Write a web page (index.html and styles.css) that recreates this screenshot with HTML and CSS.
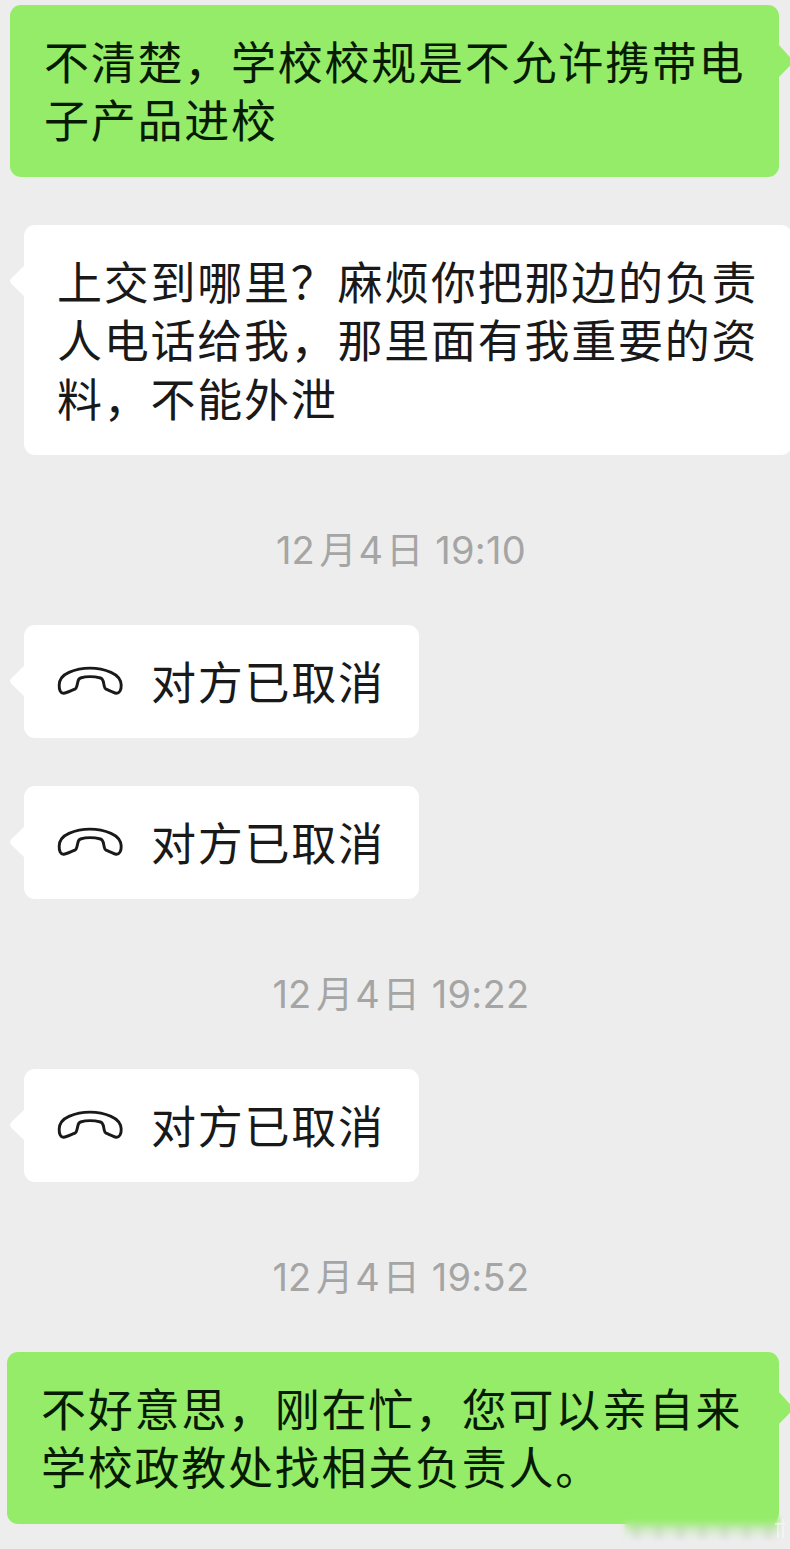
FILE: index.html
```html
<!DOCTYPE html>
<html lang="zh-CN">
<head>
<meta charset="utf-8">
<title>聊天</title>
<link rel="stylesheet" href="styles.css">
</head>
<body>
<svg class="defs" width="0" height="0" aria-hidden="true">
  <symbol id="phone" viewBox="0 0 68 34">
    <path d="M7.8 30.3C4.6 30.6 3 27 3.2 22C3.4 14.5 8 11.5 13 9.3C26 3.7 42 3.7 55 9.3C60 11.5 64.9 15.5 65.2 22C65.4 27 63.5 30.6 60 30.2C58.2 30 53 27.4 50 26.2C48.5 25.5 48.5 24 48.1 22.3C47.4 19 47.4 15.8 44.5 15C38 13.4 30 13.4 24.5 15C21.7 15.8 22 19 21.1 22C20.6 24 20.5 25.5 19 26.2C15.5 27.5 10 30.1 7.8 30.3Z"/>
  </symbol>
</svg>
<main class="chat">
  <div class="bubble sent">不清楚，学校校规是不允许携带电<br>子产品进校</div>
  <div class="bubble received wide">上交到哪里？麻烦你把那边的负责<br>人电话给我，那里面有我重要的资<br>料，不能外泄</div>
  <time class="stamp"><span class="date">12<b>月</b>4<b>日</b></span><span class="clock">19:10</span></time>
  <div class="bubble received call"><svg class="phone"><use href="#phone"/></svg><span>对方已取消</span></div>
  <div class="bubble received call next"><svg class="phone"><use href="#phone"/></svg><span>对方已取消</span></div>
  <time class="stamp"><span class="date">12<b>月</b>4<b>日</b></span><span class="clock">19:22</span></time>
  <div class="bubble received call"><svg class="phone"><use href="#phone"/></svg><span>对方已取消</span></div>
  <time class="stamp"><span class="date">12<b>月</b>4<b>日</b></span><span class="clock">19:52</span></time>
  <div class="bubble sent last">不好意思，刚在忙，您可以亲自来<br>学校政教处找相关负责人。<div class="smudge"><i></i><i></i><i></i><i></i><i></i><i></i><i></i></div><svg class="tail" viewBox="0 0 12 24"><path d="M3 6v16M0 8h10M8 3v4M8 10v12"/></svg></div>
</main>
</body>
</html>
```
FILE: styles.css
```css
* { box-sizing: border-box; }
body {
  margin: 0;
  background: #ededed;
  font-family: "Noto Sans CJK SC", sans-serif;
  overflow: hidden;
}
.defs { position: absolute; }
.chat {
  display: flex;
  flex-direction: column;
  align-items: flex-start;
  width: 790px;
  height: 1549px;
  padding-top: 5px;
  overflow: hidden;
}
.bubble {
  position: relative;
  flex: none;
  border-radius: 11px;
  color: #191919;
  font-size: 45px;
  line-height: 58.4px;
  letter-spacing: 1.75px;
  white-space: nowrap;
}
.bubble::before {
  content: "";
  position: absolute;
  top: 40px;
  width: 15px;
  height: 32px;
  background: inherit;
}
.sent {
  width: 769px;
  height: 172px;
  margin-left: 10px;
  padding: 27px 0 0 34px;
  background: #95ec69;
  color: #071b02;
}
.sent::before {
  left: 100%;
  width: 12px;
  clip-path: polygon(0 0, 100% 42%, 100% 62%, 0 100%);
}
.received {
  margin-left: 24px;
  padding-left: 33px;
  background: #fff;
}
.received::before {
  right: calc(100% - 1px);
  clip-path: polygon(100% 0, 7% 42%, 0 50%, 7% 58%, 100% 100%);
}
.wide {
  width: 768px;
  height: 230px;
  margin-top: 48px;
  padding-top: 27px;
}
.call {
  display: flex;
  align-items: center;
  width: 395px;
  height: 113px;
  padding-left: 32px;
}
.call span { margin-left: 27px; }
.phone {
  width: 68px;
  height: 34px;
  margin-bottom: 4px;
  fill: none;
  stroke: #191919;
  stroke-width: 2.9;
  stroke-linejoin: round;
}
.next { margin-top: 48px; }
.stamp {
  display: flex;
  align-items: center;
  justify-content: center;
  align-self: stretch;
  flex: none;
  gap: 12px;
  height: 170px;
  padding: 20px 0 0 12px;
  color: #a5a5a5;
  font: 38px/50px Inter, "Noto Sans CJK SC", sans-serif;
}
.date b {
  margin: 0 2px 0 5px;
  font-size: 37px;
  font-weight: 400;
}
.date b:last-child { margin: 0 0 0 3px; }
.clock { letter-spacing: .3px; }
.last {
  width: 772px;
  margin-left: 7px;
}
.smudge {
  position: absolute;
  left: 618px;
  top: 165px;
  display: flex;
  align-items: center;
  justify-content: space-around;
  width: 154px;
  height: 23px;
  background: linear-gradient(#95ec69 15%, #cbeabb 50%, #e5ebe1 80%, #ededed);
  filter: blur(2.5px);
}
.smudge i {
  width: 9px;
  height: 14px;
  margin-top: 7px;
  background: #a4b59a;
  opacity: .16;
}
.tail {
  position: absolute;
  left: 768px;
  top: 164px;
  width: 12px;
  height: 24px;
  fill: none;
  stroke: #fafafa;
  stroke-width: 1.3;
  opacity: .8;
}
```
